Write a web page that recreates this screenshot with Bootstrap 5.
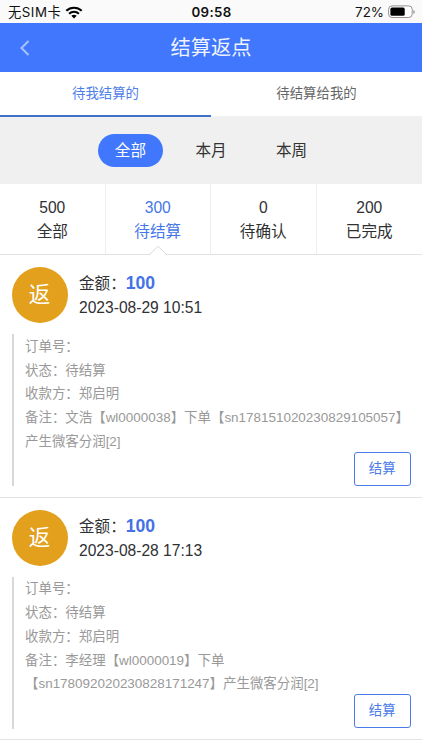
<!DOCTYPE html>
<html lang="zh-CN">
<head>
<meta charset="utf-8">
<meta name="viewport" content="width=device-width, initial-scale=1">
<title>结算返点</title>
<link href="https://cdn.jsdelivr.net/npm/bootstrap@5.3.0/dist/css/bootstrap.min.css" rel="stylesheet">
<style>
body{font-family:"Liberation Sans","Noto Sans CJK SC",sans-serif;font-size:15.6px;line-height:24px;color:#303133;background:#fff;height:750px;overflow:hidden}
.status-bar{height:23px;background:#fafafa;color:#111;font-size:13.4px;padding:0 7px 0 8px;font-family:Inter,"Noto Sans CJK SC",sans-serif;display:grid;grid-template-columns:1fr auto 1fr}
.status-bar .clock{font-weight:600;letter-spacing:.3px;font-size:13.3px}
.carrier{font-size:13.3px;letter-spacing:.5px}
.title-bar{height:49px;background:#4077fc;padding:0 20px;display:grid;grid-template-columns:1fr auto 1fr}
.title-bar h1{font-size:20.2px;font-weight:400;line-height:30px;color:#eef3ff}
.main-tabs{height:45px;font-size:13.4px}
.main-tabs a{color:#666;padding-bottom:1px;border-bottom:1px solid #f2f2f2}
.main-tabs a.active{color:#4f80ea;padding-bottom:0;border-bottom:2px solid #4272c8}
.filters{height:67px;background:#f0f0f0;gap:15.2px}
.filters .btn{width:65.4px;height:33.5px;font-size:15.6px;color:#333;border:0;line-height:24px;padding:1px 0 0}
.filters .btn.active{background:#4077fc;color:#fff}
.stats{height:71px;border-bottom:1px solid #e2e2e2}
.stats a{color:#303133;border-right:1px solid #eee;padding-top:2px}
.stats a:last-child{border-right:0}
.stats a.active{color:#4577e8}
.notch{left:50%;bottom:-2px;transform:translateX(-50%)}
.rebate{padding:12px 11.5px 11px;border-bottom:1.5px solid #e2e2e4;height:242.6px}
.avatar{width:56px;height:56px;background:#e2a01d;font-size:21.5px;color:#fff}
.summary{padding:1px 0 0 11.5px}
.amount{font-size:17.6px}
.amount{color:#4272e6}
.detail{margin-top:11px;border-left:2px solid #d8d8d8;padding:.8px 0 0 11.5px;font-size:13.45px;line-height:23.7px;color:#999;height:152px}
.remark{margin-right:-4px}
.settle{width:56.5px;height:34px;margin-top:-1.6px;font-size:13.4px;line-height:20px;color:#4a7be8;border:1px solid #4a7be8;border-radius:3px}
</style>
<script src="https://cdn.jsdelivr.net/npm/bootstrap@5.3.0/dist/js/bootstrap.bundle.min.js"></script>
</head>
<body>
<div class="status-bar align-items-center">
  <div class="d-flex align-items-center"><span class="carrier">无SIM卡</span>
    <svg class="ms-1" width="18" height="13" viewBox="0 0 18 13" fill="none" stroke="#000" stroke-width="2.2"><path d="M1.3 4.8C5.6 .7 12.4 .7 16.7 4.8M4.1 7.7C6.9 5.1 11.1 5.1 13.9 7.7"/><path d="M9 12.4 6.3 9.7Q9 7.7 11.7 9.7Z" fill="#000" stroke="none"/></svg>
  </div>
  <span class="clock">09:58</span>
  <div class="d-flex align-items-center justify-content-end"><span class="me-1">72%</span>
    <svg width="27" height="14" viewBox="0 0 27 14"><rect x=".6" y=".9" width="23.6" height="11.6" rx="3.4" fill="#fff" stroke="#929292"/><rect x="2.4" y="2.6" width="14.3" height="8.2" rx="1.6"/><path d="M25.4 5v4q1.4-.5 1.4-2T25.4 5Z" fill="#929292"/></svg>
  </div>
</div>
<header class="title-bar align-items-center">
  <svg width="10" height="16" viewBox="0 0 10 16" fill="none" stroke="#a9c2ff" stroke-width="2"><path d="M8.5 1 1.5 8l7 7"/></svg>
  <h1 class="m-0">结算返点</h1><span></span>
</header>
<nav class="main-tabs d-flex">
  <a class="active w-50 d-flex align-items-center justify-content-center text-decoration-none" href="#">待我结算的</a>
  <a class="w-50 d-flex align-items-center justify-content-center text-decoration-none" href="#">待结算给我的</a>
</nav>
<div class="filters d-flex justify-content-center align-items-center">
  <button class="btn rounded-pill active">全部</button>
  <button class="btn rounded-pill">本月</button>
  <button class="btn rounded-pill">本周</button>
</div>
<nav class="stats d-flex text-center">
  <a class="w-25 d-flex flex-column justify-content-center text-decoration-none" href="#"><span>500</span><span>全部</span></a>
  <a class="active w-25 d-flex flex-column justify-content-center text-decoration-none position-relative" href="#"><span>300</span><span>待结算</span>
    <svg class="notch position-absolute" width="20" height="11" viewBox="0 0 20 11"><path d="M1.5 10.5 10 1.5l8.5 9Z" fill="#fff"/><path d="M1.5 9.5 10 1.3l8.5 8.2" fill="none" stroke="#d9d9d9"/></svg></a>
  <a class="w-25 d-flex flex-column justify-content-center text-decoration-none" href="#"><span>0</span><span>待确认</span></a>
  <a class="w-25 d-flex flex-column justify-content-center text-decoration-none" href="#"><span>200</span><span>已完成</span></a>
</nav>
<main>
  <article class="rebate">
    <div class="d-flex align-items-center">
      <div class="avatar rounded-circle d-flex align-items-center justify-content-center">返</div>
      <div class="summary"><div>金额：<b class="amount">100</b></div><div>2023-08-29 10:51</div></div>
    </div>
    <div class="detail">
      <div>订单号：</div><div>状态：待结算</div><div>收款方：郑启明</div>
      <div class="remark">备注：文浩【wl0000038】下单【sn178151020230829105057】<br>产生微客分润[2]</div>
      <div class="d-flex justify-content-end"><button class="settle btn p-0">结算</button></div>
    </div>
  </article>
  <article class="rebate">
    <div class="d-flex align-items-center">
      <div class="avatar rounded-circle d-flex align-items-center justify-content-center">返</div>
      <div class="summary"><div>金额：<b class="amount">100</b></div><div>2023-08-28 17:13</div></div>
    </div>
    <div class="detail">
      <div>订单号：</div><div>状态：待结算</div><div>收款方：郑启明</div>
      <div class="remark">备注：李经理【wl0000019】下单<br>【sn178092020230828171247】产生微客分润[2]</div>
      <div class="d-flex justify-content-end"><button class="settle btn p-0">结算</button></div>
    </div>
  </article>
</main>
</body>
</html>
